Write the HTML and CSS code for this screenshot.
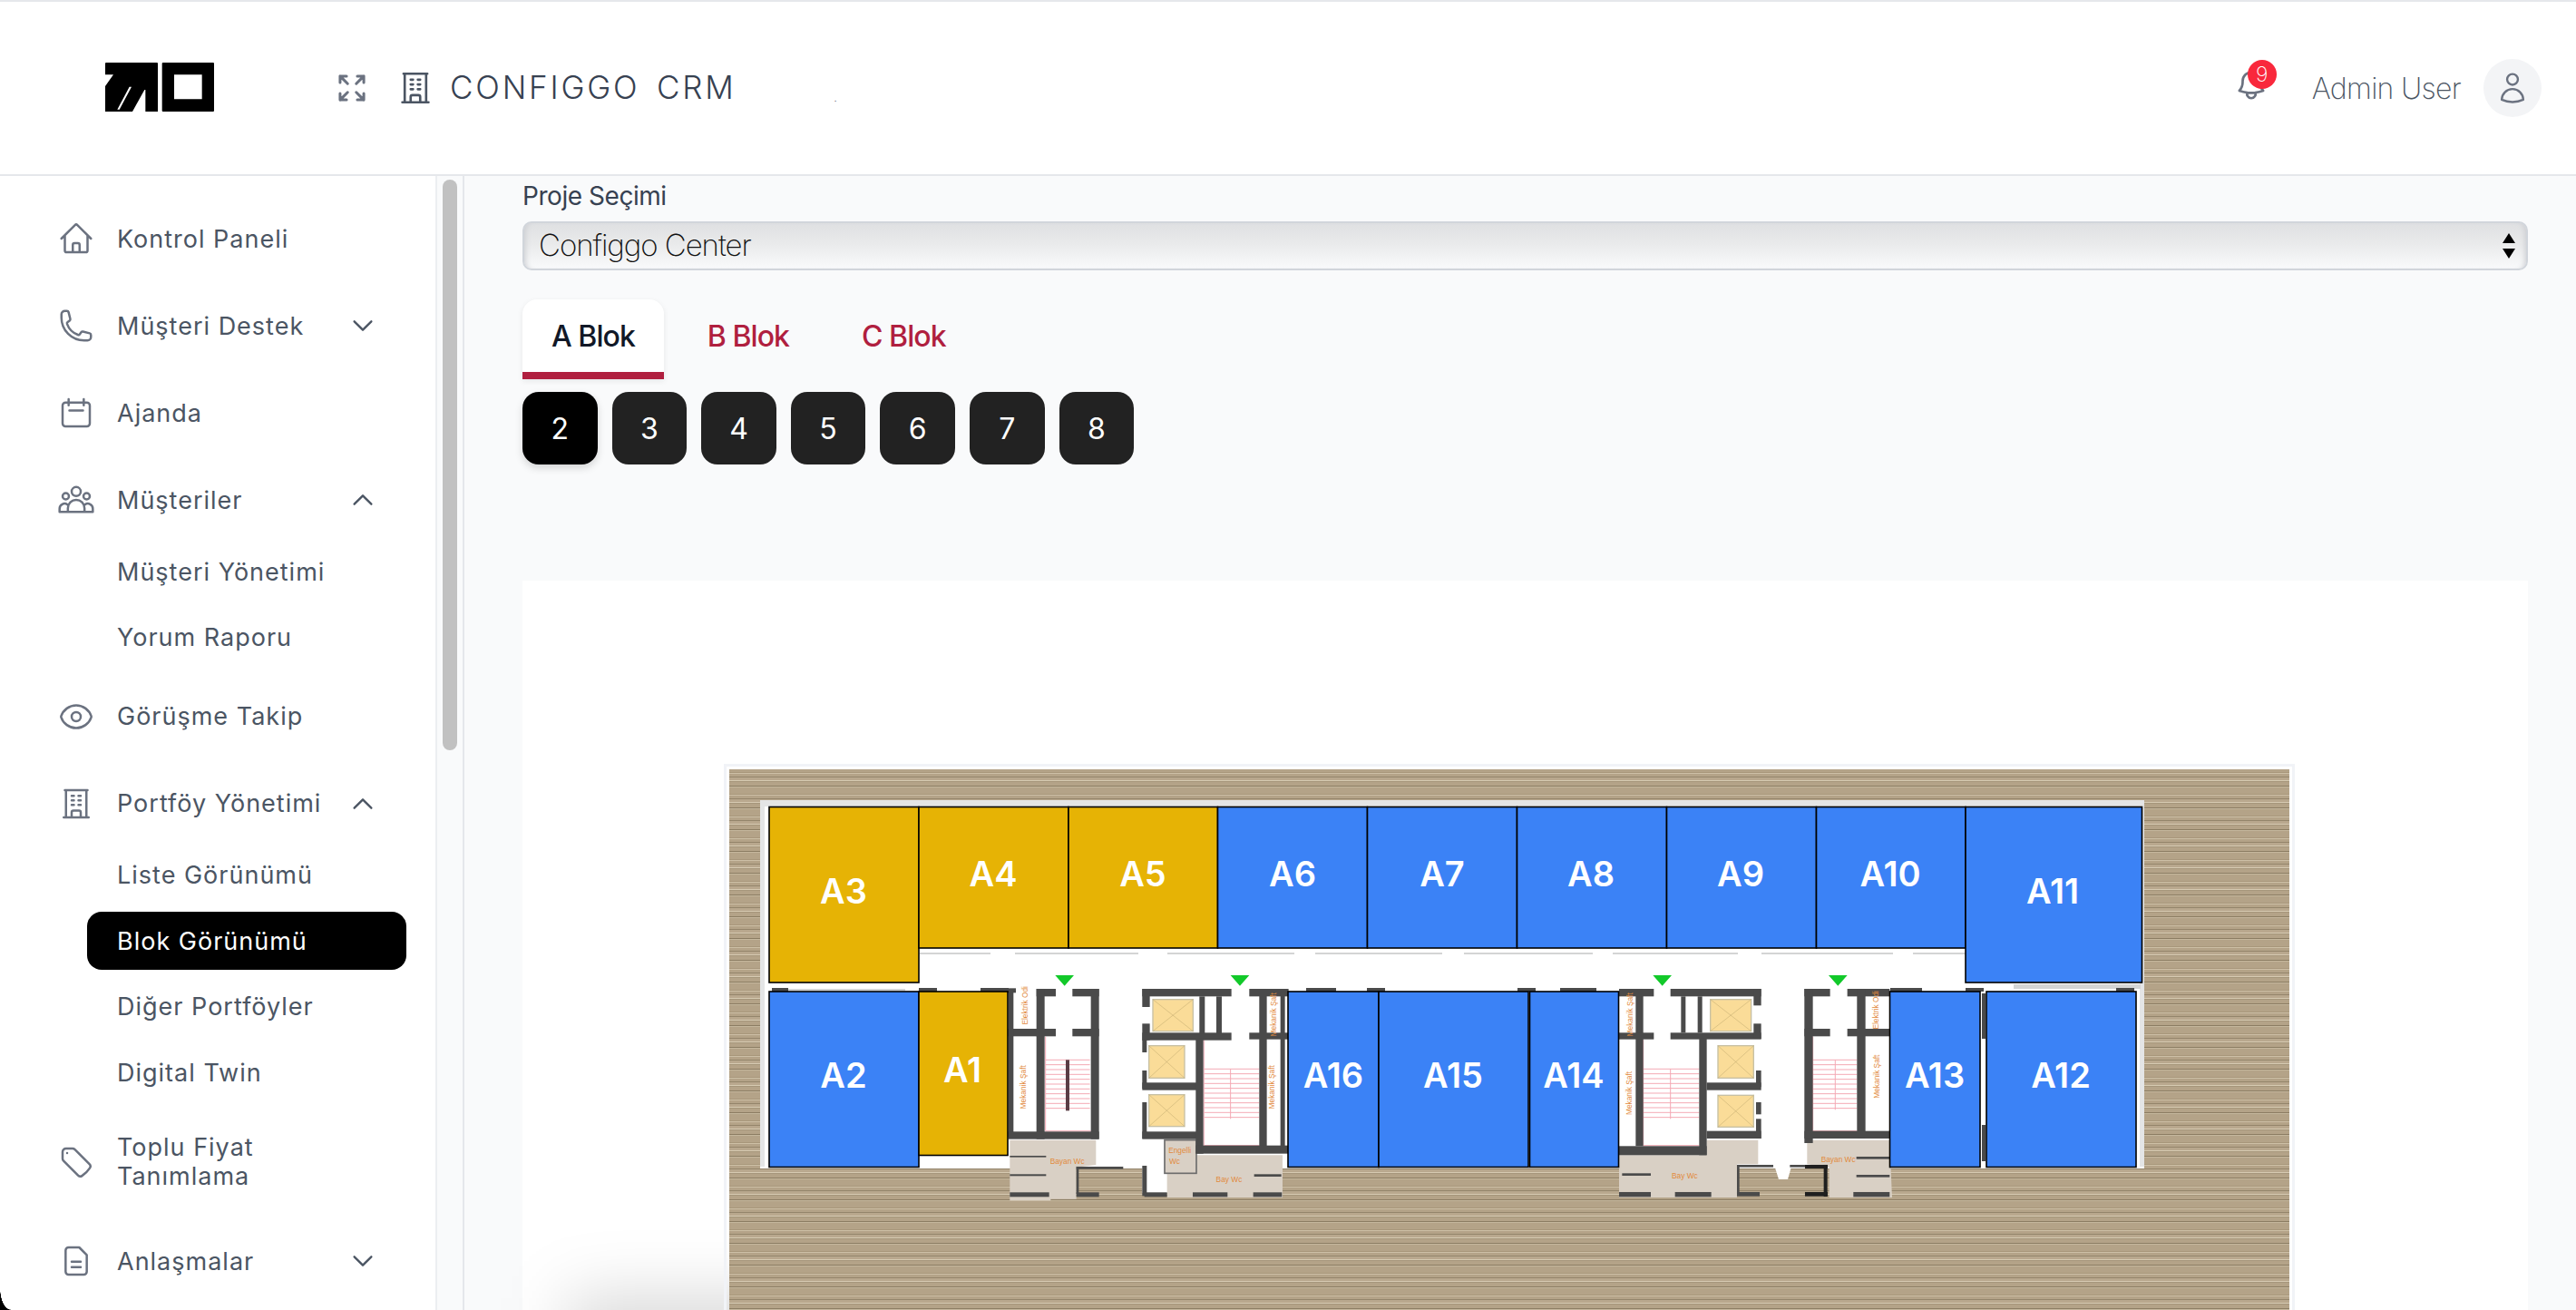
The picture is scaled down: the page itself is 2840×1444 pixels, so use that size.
FILE: index.html
```html
<!DOCTYPE html>
<html lang="en">
<head>
  <meta charset="UTF-8">
  <meta name="viewport" content="width=device-width, initial-scale=1.0">
  <title>Configgo CRM</title>
  <link rel="stylesheet" href="styles.css">
</head>
<body>
  <header class="topbar">
    <svg class="logo" viewBox="0 0 360 162">
      <path fill="#000" d="M0 3a3 3 0 013-3h168a3 3 0 013 3v159H0z"/>
      <path fill="#fff" d="M0 40h27L0 78zM40 155L80 80h7L47 155zM90 162l40-72h3v72z"/>
      <path fill="#000" fill-rule="evenodd" d="M188 3a3 3 0 013-3h166a3 3 0 013 3v156a3 3 0 01-3 3H191a3 3 0 01-3-3zM228 40v81h92V40z"/>
    </svg>
    <svg class="top-icon expand-icon" viewBox="0 0 24 24"><path d="M3.75 3.75v4.5m0-4.5h4.5m-4.5 0L9 9M3.75 20.25v-4.5m0 4.5h4.5m-4.5 0L9 15M20.25 3.75h-4.5m4.5 0v4.5m0-4.5L15 9m5.25 11.25h-4.5m4.5 0v-4.5m0 4.5L15 15"/></svg>
    <svg class="top-icon company-icon" viewBox="0 0 24 24"><path d="M3.75 21h16.5M4.5 3h15M5.25 3v18m13.5-18v18M9 6.75h1.5m-1.5 3h1.5m-1.5 3h1.5m3-6H15m-1.5 3H15m-1.5 3H15M9 21v-3.375c0-.621.504-1.125 1.125-1.125h3.75c.621 0 1.125.504 1.125 1.125V21"/></svg>
    <span class="company">CONFIGGO CRM</span>
    <span class="company-dot">.</span>
    <div class="topbar-right">
      <div class="bell">
        <svg class="top-icon" viewBox="0 0 24 24"><path d="M14.857 17.082a23.848 23.848 0 005.454-1.31A8.967 8.967 0 0118 9.75v-.7V9A6 6 0 006 9v.75a8.967 8.967 0 01-2.312 6.022c1.733.64 3.56 1.085 5.455 1.31m5.714 0a24.255 24.255 0 01-5.714 0m5.714 0a3 3 0 11-5.714 0"/></svg>
        <span class="badge">9</span>
      </div>
      <span class="username">Admin User</span>
      <div class="avatar">
        <svg class="top-icon" viewBox="0 0 24 24"><path d="M15.75 6a3.75 3.75 0 11-7.5 0 3.75 3.75 0 017.5 0zM4.501 20.118a7.5 7.5 0 0114.998 0A17.933 17.933 0 0112 21.75c-2.676 0-5.216-.584-7.499-1.632z"/></svg>
      </div>
    </div>
  </header>

  <div class="layout">
    <aside class="sidebar">
      <a class="nav-item">
        <svg class="nav-icon" viewBox="0 0 24 24"><path d="M2.25 12l8.954-8.955c.44-.439 1.152-.439 1.591 0L21.75 12M4.5 9.75v10.125c0 .621.504 1.125 1.125 1.125H9.75v-4.875c0-.621.504-1.125 1.125-1.125h2.25c.621 0 1.125.504 1.125 1.125V21h4.125c.621 0 1.125-.504 1.125-1.125V9.75M8.25 21h8.25"/></svg>
        <span>Kontrol Paneli</span>
      </a>
      <a class="nav-item">
        <svg class="nav-icon" viewBox="0 0 24 24"><path d="M2.25 6.75c0 8.284 6.716 15 15 15h2.25a2.25 2.25 0 002.25-2.25v-1.372c0-.516-.351-.966-.852-1.091l-4.423-1.106c-.44-.11-.902.055-1.173.417l-.97 1.293c-.282.376-.769.542-1.21.38a12.035 12.035 0 01-7.143-7.143c-.162-.441.004-.928.38-1.21l1.293-.97c.363-.271.527-.734.417-1.173L6.963 3.102a1.125 1.125 0 00-1.091-.852H4.5A2.25 2.25 0 002.25 4.5v2.25z"/></svg>
        <span>Müşteri Destek</span>
        <svg class="chevron" viewBox="0 0 24 24"><path d="M19.5 8.25l-7.5 7.5-7.5-7.5"/></svg>
      </a>
      <a class="nav-item">
        <svg class="nav-icon" viewBox="0 0 24 24"><path d="M3 7.2A1.95 1.95 0 014.95 5.25h14.1A1.95 1.95 0 0121 7.2v11.85A1.95 1.95 0 0119.05 21H4.95A1.95 1.95 0 013 19.05zM7 3v4M17 3v4M7.5 10.5h9"/></svg>
        <span>Ajanda</span>
      </a>
      <a class="nav-item">
        <svg class="nav-icon" viewBox="0 0 24 24"><path d="M15 6.5a3 3 0 11-6 0 3 3 0 016 0zM7.2 9.6a2.1 2.1 0 11-4.2 0 2.1 2.1 0 014.2 0zM21 9.6a2.1 2.1 0 11-4.2 0 2.1 2.1 0 014.2 0zM1 20h22M1 20v-2.2a3.3 3.3 0 015.2-2.7M23 20v-2.2a3.3 3.3 0 00-5.2-2.7M6.5 20v-2.5a5.5 5.5 0 0111 0V20"/></svg>
        <span>Müşteriler</span>
        <svg class="chevron" viewBox="0 0 24 24"><path d="M4.5 15.75l7.5-7.5 7.5 7.5"/></svg>
      </a>
      <div class="submenu">
        <a class="sub-item">Müşteri Yönetimi</a>
        <a class="sub-item">Yorum Raporu</a>
      </div>
      <a class="nav-item">
        <svg class="nav-icon" viewBox="0 0 24 24"><path d="M2.036 12.322a1.012 1.012 0 010-.639C3.423 7.51 7.36 4.5 12 4.5c4.638 0 8.573 3.007 9.963 7.178.07.207.07.431 0 .639C20.577 16.49 16.64 19.5 12 19.5c-4.638 0-8.573-3.007-9.963-7.178z"/><path d="M15 12a3 3 0 11-6 0 3 3 0 016 0z"/></svg>
        <span>Görüşme Takip</span>
      </a>
      <a class="nav-item">
        <svg class="nav-icon" viewBox="0 0 24 24"><path d="M3.75 21h16.5M4.5 3h15M5.25 3v18m13.5-18v18M9 6.75h1.5m-1.5 3h1.5m-1.5 3h1.5m3-6H15m-1.5 3H15m-1.5 3H15M9 21v-3.375c0-.621.504-1.125 1.125-1.125h3.75c.621 0 1.125.504 1.125 1.125V21"/></svg>
        <span>Portföy Yönetimi</span>
        <svg class="chevron" viewBox="0 0 24 24"><path d="M4.5 15.75l7.5-7.5 7.5 7.5"/></svg>
      </a>
      <div class="submenu">
        <a class="sub-item">Liste Görünümü</a>
        <a class="sub-item active">Blok Görünümü</a>
        <a class="sub-item">Diğer Portföyler</a>
        <a class="sub-item">Digital Twin</a>
      </div>
      <a class="nav-item nav-item-tall">
        <svg class="nav-icon" viewBox="0 0 24 24"><path d="M9.568 3H5.25A2.25 2.25 0 003 5.25v4.318c0 .597.237 1.17.659 1.591l9.581 9.581c.699.699 1.78.872 2.607.33a18.095 18.095 0 005.223-5.223c.542-.827.369-1.908-.33-2.607L11.16 3.66A2.25 2.25 0 009.568 3z"/><path d="M6 6h.008v.008H6V6z"/></svg>
        <span>Toplu Fiyat<br>Tanımlama</span>
      </a>
      <a class="nav-item">
        <svg class="nav-icon" viewBox="0 0 24 24"><path d="M14 3H7a2 2 0 00-2 2v14a2 2 0 002 2h10a2 2 0 002-2V8l-5-5zM9 12.5h6M9 16h6"/></svg>
        <span>Anlaşmalar</span>
        <svg class="chevron" viewBox="0 0 24 24"><path d="M19.5 8.25l-7.5 7.5-7.5-7.5"/></svg>
      </a>
      <div class="screen-corner"></div>
    </aside>

    <div class="rail"><div class="rail-thumb"></div></div>

    <main class="content">
      <label class="field-label" for="project">Proje Seçimi</label>
      <div class="select-wrap">
        <select class="select" id="project"><option>Configgo Center</option></select>
        <svg class="select-arrows" viewBox="0 0 14 28"><path d="M7 0l7 11H0zM0 17h14L7 28z"/></svg>
      </div>

      <div class="tabs">
        <a class="tab active">A Blok</a>
        <a class="tab">B Blok</a>
        <a class="tab">C Blok</a>
      </div>

      <div class="floors">
        <button class="floor active">2</button>
        <button class="floor">3</button>
        <button class="floor">4</button>
        <button class="floor">5</button>
        <button class="floor">6</button>
        <button class="floor">7</button>
        <button class="floor">8</button>
      </div>

      <section class="plan-card">
        <div class="plan-shade"></div>
        <div class="plan">
          <!-- coordinates below are page pixels, the core groups use 3x their own origin -->
          <svg class="plan-svg" viewBox="804 848 1720 600">
            <rect class="floor-white" x="838" y="882" width="1526" height="406"/>
            <rect class="edge" x="838" y="882" width="1526" height="7"/>
            <rect class="edge" x="838" y="882" width="5" height="404"/>
            <rect class="edge" x="2359" y="882" width="5" height="404"/>

            <g class="dash">
              <rect x="1014" y="1050" width="78" height="2"/><rect x="1119" y="1050" width="136" height="2"/>
              <rect x="1287" y="1050" width="140" height="2"/><rect x="1450" y="1050" width="140" height="2"/>
              <rect x="1614" y="1050" width="142" height="2"/><rect x="1778" y="1050" width="138" height="2"/>
              <rect x="1942" y="1050" width="145" height="2"/><rect x="2109" y="1050" width="58" height="2"/>
              <rect x="868" y="1090" width="130" height="2"/><rect x="2220" y="1085" width="140" height="5"/>
            </g>
            <g class="wall">
              <rect x="851" y="1089" width="18" height="4"/><rect x="1013" y="1089" width="20" height="4"/>
              <rect x="1081" y="1089" width="31" height="4"/><rect x="1440" y="1089" width="33" height="4"/>
              <rect x="1507" y="1089" width="20" height="4"/><rect x="1673" y="1089" width="20" height="4"/>
              <rect x="1720" y="1089" width="40" height="4"/><rect x="2084" y="1089" width="35" height="4"/>
              <rect x="2167" y="1089" width="20" height="4"/><rect x="2333" y="1089" width="20" height="4"/>
              <rect x="2185" y="1095" width="4" height="50"/><rect x="2185" y="1240" width="4" height="40"/>
            </g>

            <g transform="translate(1060 1060) scale(.3333)">
              <path class="wc" d="M160 590h285v82l-65 8v105h-85v5H160z"/>
              <rect class="floor-white" x="598" y="670" width="85" height="95"/>
              <path class="wc" d="M775 640h287v140H680v-80h95z"/>
              <rect class="wc wc-box" x="672" y="590" width="105" height="110"/>
              <g class="stair">
                <path d="M278 325h147M278 341h147M278 357h147M278 373h147M278 389h147M278 405h147M278 421h147M278 437h147M278 453h147M278 469h147M278 485h147"/>
                <path d="M278 248v312h150M802 355h183M802 371h183M802 387h183M802 403h183M802 419h183M802 435h183M802 451h183M802 467h183M802 483h183M802 499h183M802 515h183M890 355v165M802 258v350h183"/>
              </g>
              <rect class="stair-bar" x="345" y="325" width="12" height="168"/>
              <g class="wall">
                <rect x="65" y="88" width="115" height="15"/><rect x="248" y="90" width="64" height="25"/>
                <rect x="367" y="90" width="88" height="25"/><rect x="248" y="90" width="27" height="497"/>
                <rect x="428" y="90" width="27" height="497"/><rect x="248" y="222" width="64" height="25"/>
                <rect x="367" y="222" width="88" height="25"/><rect x="155" y="222" width="95" height="25"/>
                <rect x="155" y="100" width="17" height="480"/><rect x="155" y="562" width="300" height="25"/>
                <rect x="598" y="90" width="295" height="25"/><rect x="952" y="90" width="130" height="25"/>
                <rect x="598" y="90" width="25" height="60"/><rect x="598" y="205" width="25" height="55"/>
                <rect x="598" y="235" width="295" height="25"/><rect x="952" y="235" width="130" height="22"/>
                <rect x="787" y="115" width="18" height="125"/><rect x="843" y="115" width="18" height="125"/>
                <rect x="598" y="258" width="15" height="42"/><rect x="598" y="360" width="15" height="60"/>
                <rect x="598" y="400" width="180" height="25"/><rect x="598" y="465" width="15" height="60"/>
                <rect x="598" y="525" width="15" height="60"/><rect x="598" y="562" width="180" height="25"/>
                <rect x="775" y="255" width="25" height="380"/><rect x="985" y="90" width="25" height="540"/>
                <rect x="775" y="608" width="310" height="27"/><rect x="1055" y="100" width="15" height="530"/>
                <rect x="160" y="642" width="120" height="5"/><rect x="160" y="703" width="120" height="6"/>
                <rect x="160" y="763" width="130" height="15"/><rect x="380" y="763" width="75" height="15"/>
                <rect x="380" y="678" width="155" height="8"/><rect x="380" y="678" width="8" height="90"/>
                <rect x="968" y="703" width="90" height="8"/><rect x="765" y="763" width="115" height="15"/>
                <rect x="965" y="763" width="95" height="15"/><rect x="605" y="763" width="75" height="15"/>
                <rect x="598" y="675" width="15" height="100"/>
              </g>
              <g class="lift">
                <rect x="633" y="125" width="133" height="105"/><path d="M633 125l133 105M766 125L633 230"/>
                <rect x="620" y="278" width="118" height="107"/><path d="M620 278l118 107M738 278L620 385"/>
                <rect x="620" y="440" width="118" height="105"/><path d="M620 440l118 105M738 440L620 545"/>
              </g>
              <path class="exit-mark" d="M310 45h62l-31 35zM890 45h62l-31 35z"/>
              <text class="room-label" x="330" y="668" text-anchor="middle" transform="translate(20 0)">Bayan Wc</text>
              <text class="room-label" x="722" y="632" text-anchor="middle">Engelli</text>
              <text class="room-label" x="705" y="668" text-anchor="middle">Wc</text>
              <text class="room-label" x="885" y="730" text-anchor="middle">Bay Wc</text>
              <text class="room-label" transform="translate(218 145) rotate(-90)" text-anchor="middle">Elektrik Odi</text>
              <text class="room-label" transform="translate(212 415) rotate(-90)" text-anchor="middle">Mekanik Şaft</text>
              <text class="room-label" transform="translate(1040 175) rotate(-90)" text-anchor="middle">Mekanik Şaft</text>
              <text class="room-label" transform="translate(1036 415) rotate(-90)" text-anchor="middle">Mekanik Şaft</text>
            </g>

            <g transform="translate(1760 1060) scale(.3333)">
              <path class="wc" d="M75 640h290v-50h170v80h-70v110H75z"/>
              <path class="wc" d="M697 590h273l8 190H770v-100l-73-10z"/>
              <path class="floor-white" d="M590 678h55l-12 42h-30z"/>
              <g class="stair">
                <path d="M155 355h185M155 371h185M155 387h185M155 403h185M155 419h185M155 435h185M155 451h185M155 467h185M155 483h185M155 499h185M155 515h185M245 355v165M155 258v350h185"/>
                <path d="M716 325h146M716 341h146M716 357h146M716 373h146M716 389h146M716 405h146M716 421h146M716 437h146M716 453h146M716 469h146M716 485h146M790 325v165M716 248v312h146"/>
              </g>
              <g class="wall">
                <rect x="75" y="90" width="115" height="25"/><rect x="245" y="90" width="300" height="25"/>
                <rect x="130" y="90" width="25" height="520"/><rect x="75" y="235" width="115" height="22"/>
                <rect x="245" y="235" width="300" height="22"/><rect x="280" y="115" width="15" height="120"/>
                <rect x="335" y="115" width="15" height="120"/><rect x="340" y="255" width="25" height="385"/>
                <rect x="75" y="610" width="290" height="30"/><rect x="520" y="90" width="25" height="55"/>
                <rect x="520" y="205" width="25" height="50"/><rect x="528" y="360" width="17" height="55"/>
                <rect x="365" y="400" width="180" height="25"/><rect x="528" y="465" width="17" height="40"/>
                <rect x="528" y="520" width="17" height="65"/><rect x="365" y="560" width="180" height="25"/>
                <rect x="688" y="90" width="85" height="25"/><rect x="830" y="90" width="140" height="25"/>
                <rect x="688" y="90" width="28" height="510"/><rect x="862" y="90" width="28" height="495"/>
                <rect x="688" y="222" width="85" height="25"/><rect x="830" y="222" width="140" height="25"/>
                <rect x="688" y="560" width="285" height="25"/><rect x="85" y="700" width="95" height="8"/>
                <rect x="75" y="762" width="105" height="16"/><rect x="260" y="762" width="120" height="16"/>
                <rect x="465" y="762" width="75" height="14"/><rect x="465" y="672" width="120" height="8"/>
                <rect x="465" y="672" width="8" height="95"/><rect x="640" y="672" width="50" height="8"/>
                <rect class="wall-dark" x="690" y="672" width="75" height="12"/><rect class="wall-dark" x="752" y="672" width="12" height="105"/>
                <rect class="wall-dark" x="690" y="762" width="75" height="14"/><rect x="860" y="645" width="110" height="8"/>
                <rect x="860" y="705" width="110" height="8"/><rect x="850" y="762" width="120" height="16"/>
              </g>
              <g class="lift">
                <rect x="377" y="125" width="135" height="105"/><path d="M377 125l135 105M512 125L377 230"/>
                <rect x="402" y="278" width="118" height="107"/><path d="M402 278l118 107M520 278L402 385"/>
                <rect x="402" y="442" width="118" height="105"/><path d="M402 442l118 105M520 442L402 547"/>
              </g>
              <path class="exit-mark" d="M187 45h62l-31 35zM768 45h62l-31 35z"/>
              <text class="room-label" x="292" y="718" text-anchor="middle">Bay Wc</text>
              <text class="room-label" x="800" y="662" text-anchor="middle">Bayan Wc</text>
              <text class="room-label" transform="translate(120 175) rotate(-90)" text-anchor="middle">Mekanik Şaft</text>
              <text class="room-label" transform="translate(116 435) rotate(-90)" text-anchor="middle">Mekanik Şaft</text>
              <text class="room-label" transform="translate(932 160) rotate(-90)" text-anchor="middle">Elektrik Odi</text>
              <text class="room-label" transform="translate(935 380) rotate(-90)" text-anchor="middle">Mekanik Şaft</text>
            </g>

            <rect class="unit sold" x="848" y="889.5" width="165" height="193.5"/><text class="unit-label" x="930" y="984">A3</text>
            <rect class="unit sold" x="1013" y="889.5" width="165" height="155.5"/><text class="unit-label" x="1095" y="965">A4</text>
            <rect class="unit sold" x="1178" y="889.5" width="164.5" height="155.5"/><text class="unit-label" x="1260" y="965">A5</text>
            <rect class="unit free" x="1342.5" y="889.5" width="165" height="155.5"/><text class="unit-label" x="1425" y="965">A6</text>
            <rect class="unit free" x="1507.5" y="889.5" width="165" height="155.5"/><text class="unit-label" x="1590" y="965">A7</text>
            <rect class="unit free" x="1672.5" y="889.5" width="165" height="155.5"/><text class="unit-label" x="1754" y="965">A8</text>
            <rect class="unit free" x="1837.5" y="889.5" width="165" height="155.5"/><text class="unit-label" x="1919" y="965">A9</text>
            <rect class="unit free" x="2002.5" y="889.5" width="164.5" height="155.5"/><text class="unit-label" x="2084" y="965">A10</text>
            <rect class="unit free" x="2167" y="889.5" width="194.5" height="193.5"/><text class="unit-label" x="2263" y="984">A11</text>
            <rect class="unit free" x="848" y="1093" width="165" height="193.5"/><text class="unit-label" x="930" y="1187">A2</text>
            <rect class="unit sold" x="1013" y="1093" width="98" height="180.5"/><text class="unit-label" x="1061" y="1181">A1</text>
            <rect class="unit free" x="1420" y="1093" width="100" height="193.5"/><text class="unit-label" x="1470" y="1187">A16</text>
            <rect class="unit free" x="1520" y="1093" width="165" height="193.5"/><text class="unit-label" x="1602" y="1187">A15</text>
            <rect class="unit free" x="1686.5" y="1093" width="98" height="193.5"/><text class="unit-label" x="1735" y="1187">A14</text>
            <rect class="unit free" x="2083.5" y="1093" width="99.5" height="193.5"/><text class="unit-label" x="2133" y="1187">A13</text>
            <rect class="unit free" x="2190" y="1093" width="165" height="193.5"/><text class="unit-label" x="2272" y="1187">A12</text>
          </svg>
        </div>
      </section>
    </main>
  </div>
</body>
</html>
```

FILE: styles.css
```css
* { box-sizing: border-box; }

body {
  margin: 0;
  height: 100vh;
  overflow: hidden;
  display: flex;
  flex-direction: column;
  background: #f9fafb;
  font-family: Inter, "Liberation Sans", sans-serif;
  color: #374151;
}

/* top bar */
.topbar {
  flex: none;
  height: 194px;
  display: flex;
  align-items: center;
  padding: 0 38px 0 116px;
  background: #fff;
  border-top: 2px solid #e5e7eb;
  border-bottom: 2px solid #e5e7eb;
}
.logo { width: 120px; height: 54px; flex: none; margin-top: -2px; }
.top-icon {
  fill: none;
  stroke: #6b7280;
  stroke-width: 1.5;
  stroke-linecap: round;
  stroke-linejoin: round;
}
.expand-icon { width: 38px; height: 38px; margin-left: 133px; stroke-width: 1.9; }
.company-icon { width: 42px; height: 42px; margin-left: 30px; stroke: #4b5563; }
.company {
  margin-left: 17px;
  margin-top: -2px;
  font-size: 35px;
  font-weight: 300;
  color: #374151;
  letter-spacing: 2.8px;
  word-spacing: 6px;
}
.company-dot { margin-left: 108px; font-size: 9px; color: #6b7280; align-self: center; padding-top: 22px; }

.topbar-right { margin-left: auto; display: flex; align-items: center; }
.bell { position: relative; width: 38px; height: 38px; margin: -6px 48px 0 0; }
.bell .top-icon { width: 38px; height: 38px; stroke-width: 1.7; }
.badge {
  position: absolute;
  left: 15px;
  top: -9px;
  width: 32px;
  height: 32px;
  border-radius: 50%;
  background: #f9283c;
  color: #fff;
  font-size: 23px;
  font-weight: 200;
  line-height: 32px;
  text-align: center;
}
.username { font-size: 32px; font-weight: 200; color: #4b5563; letter-spacing: -.7px; }
.avatar {
  width: 64px;
  height: 64px;
  margin-left: 25px;
  border-radius: 50%;
  background: #f3f4f6;
  display: flex;
  align-items: center;
  justify-content: center;
}
.avatar .top-icon { width: 38px; height: 38px; }

.layout { flex: 1; min-height: 0; display: flex; }

/* sidebar */
.sidebar {
  position: relative;
  flex: none;
  width: 480px;
  display: flex;
  flex-direction: column;
  gap: 32px;
  padding-top: 37px;
  background: #fff;
}
.nav-item {
  flex: none;
  height: 64px;
  display: flex;
  align-items: center;
  padding-left: 64px;
  font-size: 27px;
  color: #4b5563;
  letter-spacing: 1px;
}
.nav-item-tall { height: 92px; line-height: 32px; margin: -2px 0 -1px; }
.nav-icon {
  width: 40px;
  height: 40px;
  flex: none;
  margin-right: 25px;
  fill: none;
  stroke: #6b7280;
  stroke-width: 1.5;
  stroke-linecap: round;
  stroke-linejoin: round;
}
.chevron {
  width: 30px;
  height: 30px;
  margin-left: auto;
  margin-right: 65px;
  fill: none;
  stroke: #4b5563;
  stroke-width: 1.9;
  stroke-linecap: round;
  stroke-linejoin: round;
}
.submenu {
  display: flex;
  flex-direction: column;
  gap: 8.6px;
  margin: -17px 0 -9px;
  padding: 0 32px 0 96px;
}
.sub-item {
  height: 64px;
  display: flex;
  align-items: center;
  padding-left: 33px;
  border-radius: 16px;
  font-size: 27px;
  color: #4b5563;
  letter-spacing: 1px;
}
.sub-item.active { background: #000; color: #fff; }
.screen-corner {
  position: absolute;
  left: 0;
  bottom: 0;
  width: 12px;
  height: 24px;
  background: radial-gradient(ellipse 12px 24px at 100% 0, transparent 97%, #000 100%);
}

/* sidebar scrollbar */
.rail {
  flex: none;
  width: 32px;
  padding: 4px 6px 0 8px;
  background: #f9fafb;
  border-left: 2px solid #eceef1;
  border-right: 2px solid #e5e7eb;
}
.rail-thumb { width: 16px; height: 629px; margin-left: -2px; border-radius: 8px; background: #c1c1c1; }

/* main */
.content {
  flex: 1;
  min-width: 0;
  overflow: hidden;
  padding: 0 53px 0 64px;
}
.field-label {
  display: block;
  height: 50px;
  padding-top: 5px;
  font-size: 28px;
  line-height: 34px;
  color: #374151;
  letter-spacing: -.45px;
}
.select-wrap { position: relative; }
.select {
  display: block;
  width: 100%;
  height: 54px;
  padding: 0 16px 2px;
  appearance: none;
  border: 2px solid #d1d5db;
  border-radius: 10px;
  background: linear-gradient(#dfe0e2, #e9eaeb 45%, #f9fafb);
  box-shadow: inset 6px 0 6px -5px #c9cbcf, inset -6px 0 6px -5px #c9cbcf;
  font-family: inherit;
  font-size: 33px;
  font-weight: 250;
  color: #111;
  letter-spacing: -1.05px;
}
.select-arrows {
  position: absolute;
  right: 14px;
  top: 13px;
  width: 14px;
  height: 28px;
  fill: #000;
}

.tabs { display: flex; gap: 16px; margin-top: 32px; }
.tab {
  height: 88px;
  padding: 0 32px;
  display: flex;
  align-items: center;
  border-bottom: 8px solid transparent;
  border-radius: 16px 16px 0 0;
  font-size: 32px;
  font-weight: 500;
  color: #b01f3f;
  letter-spacing: -.95px;
}
.tab.active {
  background: #fff;
  color: #111827;
  border-bottom-color: #b01f3f;
  box-shadow: 0 2px 6px rgba(0, 0, 0, .08);
}

.floors { display: flex; gap: 16px; margin-top: 14px; }
.floor {
  width: 82.6px;
  height: 80px;
  padding: 0;
  border: none;
  border-radius: 18px;
  background: #222;
  color: #fff;
  font-family: inherit;
  font-size: 32px;
}
.floor.active { background: #000; box-shadow: 0 4px 8px rgba(0, 0, 0, .15); }

/* floor plan */
.plan-card {
  position: relative;
  margin-top: 128px;
  height: 900px;
  padding: 208px 0 0 227.5px;
  background: #fff;
}
.plan-shade {
  position: absolute;
  left: 50px;
  top: 790px;
  width: 1700px;
  height: 80px;
  background: rgba(0, 0, 0, .16);
  filter: blur(36px);
}
.plan {
  position: relative;
  width: 1720px;
  height: 600px;
  outline: 3px solid #f1f3f7;
  outline-offset: 3px;
  background: repeating-linear-gradient(to bottom,
    #b4a388 0 3px, #a8977b 3px 4px, #cdbfa6 4px 5px, #b4a388 5px 8px,
    #94856b 8px 9px, #b9a88e 9px 12px, #d6cab2 12px 13px, #a6967b 13px 14px,
    #b4a388 14px 18px, #8c7d63 18px 19px, #c5b79d 19px 20px, #b4a388 20px 24px);
}
.plan-svg { display: block; width: 100%; height: 100%; }
.floor-white { fill: #fff; }
.edge { fill: #e4e5e6; }
.dash rect { fill: #d4d5d5; }
.wall rect { fill: #4a4a4a; }
.wall .wall-dark { fill: #1f1f1f; }
.wc { fill: #d9d0c5; }
.wc-box { stroke: #6d6d6d; stroke-width: 5; }
.stair path { fill: none; stroke: #f4a9b4; stroke-width: 3; }
.stair-bar { fill: #5a3d45; }
.lift rect { fill: #fadc98; stroke: #c7c0a4; stroke-width: 4; }
.lift path { fill: none; stroke: #bfa86d; stroke-width: 1.5; }
.exit-mark { fill: #12c92a; }
.room-label { font-size: 25px; fill: #e28a3c; font-family: "Liberation Sans", sans-serif; }
.unit { stroke: #000; stroke-width: 1.6; }
.unit.sold { fill: #e6b305; }
.unit.free { fill: #3b82f6; }
.unit-label {
  fill: #fff;
  font-size: 38px;
  font-weight: 600;
  text-anchor: middle;
  dominant-baseline: central;
  transform: translateY(-2px);
}
```
